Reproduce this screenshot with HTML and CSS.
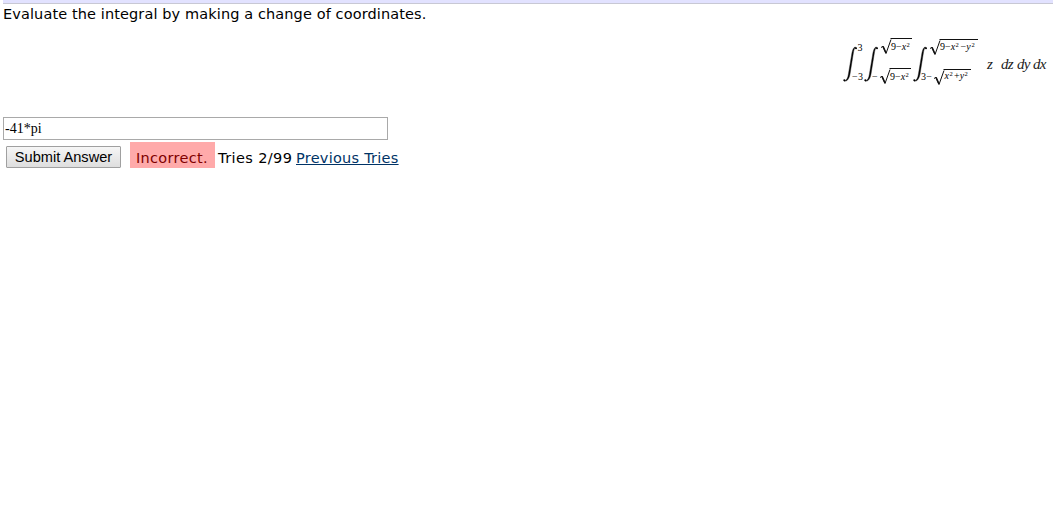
FILE: index.html
```html
<!DOCTYPE html>
<html lang="en">
<head>
<meta charset="utf-8">
<title>Change of coordinates</title>
<link rel="stylesheet" href="styles.css">
</head>
<body>
<div class="topbar"></div>
<main class="problem">
  <p class="question">Evaluate the integral by making a change of coordinates.</p>
  <svg class="formula" viewBox="838 30 215 60" role="img" aria-label="Triple integral of z dz dy dx">
    <defs>
      <g id="integral">
        <path class="stem" d="M12.6 0C10.6 0 9.7 2.5 8.9 6L5.4 27C4.8 31 3.6 33.5 1.3 33.8L1.5 34.3C4.8 34.2 6.5 31 7.2 26L10.4 6C10.9 3 11.5 .8 12.8 .6Z"/>
        <circle cx="13" cy="1.2" r="1"/><circle cx="1.3" cy="33.3" r="1"/>
      </g>
      <g id="radical">
        <path d="M0 8L2 6.8L5 14L10 0"/>
        <path class="thick" d="M2 6.8L5 13.5"/>
      </g>
    </defs>
    <use href="#integral" x="843" y="47"/>
    <use href="#integral" x="864" y="47"/>
    <use href="#integral" x="913" y="47"/>
    <g class="limit">
      <text x="857.5" y="51">3</text>
      <text x="852" y="80" textLength="11">−3</text>
      <text x="872" y="80" textLength="6">−</text>
      <text x="921" y="80" textLength="11">3−</text>
    </g>
    <g class="radical">
      <use href="#radical" x="881" y="39.5"/><path d="M890.5 38.5H912"/>
      <use href="#radical" x="880" y="69.5"/><path d="M889.5 68.5H911"/>
      <use href="#radical" x="930" y="40.5"/><path d="M939.5 39.5H978"/>
      <use href="#radical" x="934" y="70.5"/><path d="M943.5 69.5H971"/>
    </g>
    <g class="limit">
      <text x="891" y="50">9−<tspan class="var">x</tspan></text><text class="power" x="906.5" y="47">2</text>
      <text x="890" y="80">9−<tspan class="var">x</tspan></text><text class="power" x="905.5" y="77">2</text>
      <text x="940" y="50">9−<tspan class="var">x</tspan></text><text class="power" x="955.5" y="47">2</text>
      <text x="960.5" y="50">−<tspan class="var">y</tspan></text><text class="power" x="971.5" y="47">2</text>
      <text class="var" x="944.5" y="79">x</text><text class="power" x="949.5" y="76">2</text>
      <text x="954" y="79">+<tspan class="var">y</tspan></text><text class="power" x="964.5" y="76">2</text>
    </g>
    <g class="integrand">
      <text x="987" y="68.5">z</text>
      <text x="1001" y="68.5" textLength="12.5">dz</text>
      <text x="1017" y="68.5" textLength="13.5">dy</text>
      <text x="1033" y="68.5" textLength="13.5">dx</text>
    </g>
  </svg>
  <form class="answer">
    <input class="answer-field" type="text" value="-41*pi" aria-label="Answer">
    <div class="result">
      <button class="submit" type="button">Submit Answer</button>
      <span class="verdict">Incorrect.</span>
      <span class="tries">Tries 2/99</span>
      <a class="previous" href="#">Previous Tries</a>
    </div>
  </form>
</main>
</body>
</html>
```
FILE: styles.css
```css
body {
  margin: 0;
  background: #fff;
  color: #000;
  font: 14.5px/20px Verdana, "DejaVu Sans", sans-serif;
}
.topbar {
  box-sizing: border-box;
  height: 4px;
  margin-left: 3px;
  background: #e2e2ff;
  border-bottom: 1px solid #c8c8d4;
}
.problem {
  display: flex;
  flex-direction: column;
}
.question {
  height: 26px;
  margin: 0 0 0 3px;
  letter-spacing: .11px;
}
.formula {
  align-self: flex-end;
  width: 215px;
  height: 60px;
}
.stem {
  stroke: #222;
  stroke-width: .4;
}
.limit {
  font: 10px "Liberation Serif", serif;
}
.limit .power {
  font-size: 6.5px;
}
.var {
  font-style: italic;
}
.radical {
  fill: none;
  stroke: #111;
  stroke-width: 1;
}
.thick {
  stroke-width: 1.6;
}
.integrand {
  font: italic 15px "Liberation Serif", serif;
  fill: #222;
}
.answer {
  padding: 27px 0 0 3px;
}
.answer-field {
  display: block;
  box-sizing: border-box;
  width: 385px;
  height: 23px;
  margin: 0;
  padding: 1px 1px 0;
  border: 1px solid #a9a9a9;
  font: 14px "Liberation Serif", serif;
  color: #000;
}
.result {
  display: flex;
  margin-top: 2px;
  height: 26px;
  line-height: 32px;
  white-space: nowrap;
}
.submit {
  box-sizing: border-box;
  width: 115px;
  height: 22px;
  margin: 4px 9px 0 3px;
  padding: 0;
  border: 1px solid #a0a0a0;
  border-radius: 1px;
  background: linear-gradient(#f6f6f6, #dedede);
  font: 14.6px "Liberation Sans", sans-serif;
  color: #000;
}
.verdict {
  box-sizing: border-box;
  width: 85px;
  padding-left: 6px;
  background: #faa;
  color: #800000;
  letter-spacing: .3px;
}
.tries {
  box-sizing: border-box;
  width: 78px;
  padding-left: 3px;
  letter-spacing: .4px;
}
.previous {
  margin-left: 3px;
  color: #003366;
  letter-spacing: .25px;
}
```
